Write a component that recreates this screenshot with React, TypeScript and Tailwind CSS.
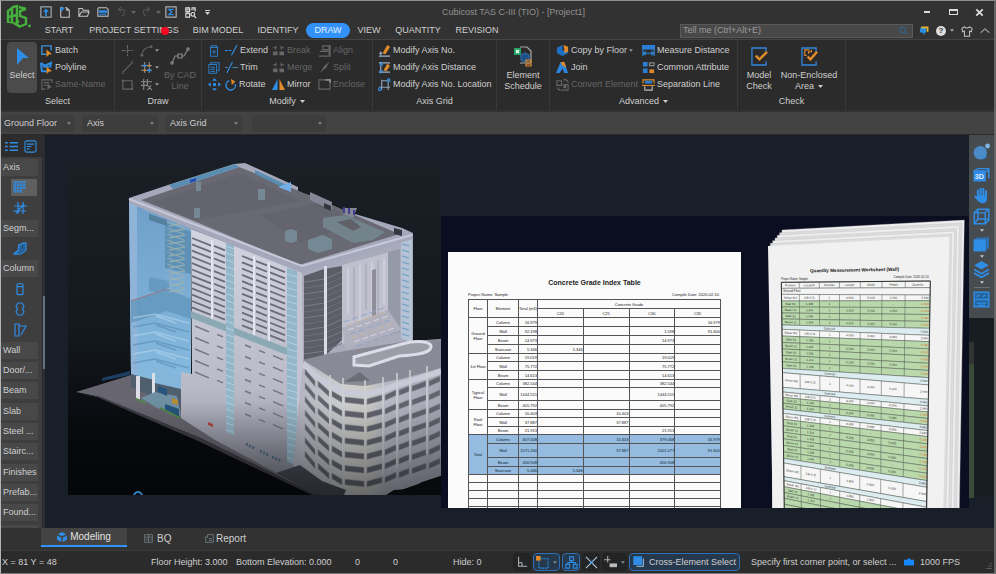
import type { ReactNode } from "react";

const BLUE = "#2f8de6";
const ORANGE = "#e08a2a";
const GREY = "#666666";

function Svg({ w = 13, h = w, vb = "0 0 14 14", children }: { w?: number; h?: number; vb?: string; children: ReactNode }) {
  return (
    <svg width={w} height={h} viewBox={vb} fill="none" stroke={BLUE} strokeWidth="1.2" className="shrink-0" aria-hidden="true">
      {children}
    </svg>
  );
}

function Caret({ className = "" }: { className?: string }) {
  return (
    <svg width="5" height="3" viewBox="0 0 5 3" className={"shrink-0 fill-current " + className} aria-hidden="true">
      <path d="M0 0h5L2.500 3z" />
    </svg>
  );
}

/* ---------- title bar and menu ---------- */

function Logo() {
  return (
    <svg width="26" height="25" viewBox="0 0 26 25" fill="none" stroke="#45b03c" strokeWidth="2.400" aria-hidden="true">
      <path d="M2 19V7l5-4 4-1v18M6 4v15M2 13l9-2" />
      <path d="M20 5l-6 2v5l6 2v6l-7 3M13 3l7 2M13 17l-3 2 4 4" />
      <path d="M2 18l5 1 7 4" strokeWidth="1.500" />
      <circle cx="23.500" cy="22" r="1.400" fill="#45b03c" stroke="none" />
    </svg>
  );
}

const quickIcons: { name: string; icon: ReactNode }[] = [
  { name: "Home", icon: <Svg w={12}><rect x="1" y="1" width="12" height="12" stroke="#aebbc8" /><path d="M7 12V5" strokeWidth="2" /><path d="M3.500 7L7 3l3.500 4z" fill={BLUE} stroke="none" /></Svg> },
  { name: "New", icon: <Svg w={12}><path d="M5 2H2v11h10V5L9 2H7M9 2v3h3" stroke="#c4c4c4" /><path d="M1 3h5M3.500 1v5" strokeWidth="1.600" /></Svg> },
  { name: "Open", icon: <Svg w={12}><path d="M1 12V3h4l1 2h6v2M1 12l3-5h9l-2 5z" stroke="#c4c4c4" /></Svg> },
  { name: "Save", icon: <Svg w={12}><path d="M2 2h9l2 2v8H1V3z" stroke="#c4c4c4" /><rect x="2" y="5" width="10" height="3" fill={BLUE} stroke="none" /><path d="M4 12V9.500h6V12" /></Svg> },
];

function TitleBar() {
  return (
    <div className="flex h-[21px] items-center pt-px">
      <div className="flex flex-1 items-center pl-[35px] text-[#666666]">
        {quickIcons.map((q) => (
          <button key={q.name} aria-label={q.name} className="flex w-[19px] justify-center">{q.icon}</button>
        ))}
        <button aria-label="Undo" className="flex w-[19px] justify-center"><Svg w={12}><path d="M4 4h3c4 0 4 5 0 8M6 1L3 4l3 3" stroke="#555" /></Svg></button>
        <Caret />
        <button aria-label="Redo" className="flex w-[20px] justify-center"><Svg w={12}><path d="M10 4H7c-4 0-4 5 0 8M8 1l3 3-3 3" stroke="#555" /></Svg></button>
        <Caret />
        <button aria-label="Summary" className="flex w-[20px] justify-center"><Svg w={12}><rect x="1" y="1" width="12" height="12" stroke="#c4c4c4" /><path d="M10 4H4.500L8 7l-3.500 3H10" strokeWidth="1.500" /></Svg></button>
        <button aria-label="Find element" className="flex w-[19px] justify-center"><Svg><path d="M2 2h4v4H2zM8 2h4v4M2 8h4v4H2z" stroke="#ddd" /><path d="M1 4h12M4 1v8M8 3h3" stroke="#ccc" strokeWidth=".8" /><circle cx="9.500" cy="9" r="2" stroke="#eee" /><path d="M11 10.500l2 2.500" stroke="#eee" /></Svg></button>
        <button aria-label="Customize" className="flex w-[14px] flex-col items-center gap-px text-[#d0d0d0]"><span className="h-px w-[5px] bg-current" /><Caret /></button>
      </div>
      <h1 className="text-[9px] text-[#929292]">Cubicost TAS C-III (TIO) - [Project1]</h1>
      <div className="flex flex-1 justify-end gap-[2px] pr-[3px]">
        <button aria-label="Minimize" className="flex w-6 items-center justify-center"><span className="h-[2px] w-[6px] bg-[#dddddd]" /></button>
        <button aria-label="Maximize" className="flex w-6 items-center justify-center"><span className="h-[6px] w-[9px] border border-t-2 border-[#dddddd]" /></button>
        <button aria-label="Close" className="flex w-6 items-center justify-center"><Svg w={9}><path d="M2 2l10 10M12 2L2 12" stroke="#e0e0e0" strokeWidth="2.600" /></Svg></button>
      </div>
    </div>
  );
}

const menu = [
  { name: "START", w: "w-[38px]" },
  { name: "PROJECT SETTINGS", w: "w-[112px]", dot: true },
  { name: "BIM MODEL", w: "w-[56px]" },
  { name: "IDENTIFY", w: "w-[60px] pl-1" },
  { name: "DRAW", w: "w-[44px]", on: true },
  { name: "VIEW", w: "w-[38px]" },
  { name: "QUANTITY", w: "w-[60px]" },
  { name: "REVISION", w: "w-[58px]" },
];

function MenuBar() {
  return (
    <nav className="flex h-[17px] items-center pl-[39px]">
      {menu.map((m) => (
        <button key={m.name} className={"relative h-[15px] shrink-0 whitespace-nowrap text-center leading-[15px] " + m.w + (m.on ? " rounded-full bg-[#3391fa] text-[#e4f1ff]" : "")}>
          {m.name}
          {m.dot && <span className="absolute top-[4px] right-[21px] h-2 w-2 rounded-full bg-[#fb0724]" />}
        </button>
      ))}
      <div className="ml-auto flex h-[14px] w-[233px] items-center border border-[#5a5a5a] bg-[#484848] pr-1">
        <input aria-label="Tell me" placeholder="Tell me (Ctrl+Alt+E)" className="min-w-0 flex-1 bg-transparent px-[2px] text-[9px] placeholder:text-[#9b9b9b]" />
        <Svg w={9}><circle cx="6" cy="6" r="4.500" stroke="#2675b8" /><path d="M9 9l4 4" stroke="#2675b8" /></Svg>
      </div>
      <div className="flex items-center gap-[7px] pr-[4px] pl-[6px] text-[#aaaaaa]">
        <button aria-label="Messages"><Svg w={10}><path d="M2 2h8v6l-4 5V9H1z" fill="#2a8fe4" stroke="none" /><path d="M3 2h9v6" stroke="#e7b72c" strokeWidth="2.500" /></Svg></button>
        <button aria-label="Help" className="flex items-center gap-1"><span className="flex h-[10px] w-[10px] items-center justify-center rounded-full bg-[#dedede] text-[8px] font-bold text-[#333333]">?</span><Caret className="w-[4px]" /></button>
        <button aria-label="Skin"><Svg w={12}><path d="M4 2L1 4l1 4 2-1v6h6V7l2 1 1-4-3-2c-1 2-5 2-6 0z" stroke="#c4c4c4" /></Svg></button>
        <button aria-label="Collapse ribbon"><Svg w={10}><path d="M1 9.500L7 4l6 5.500" stroke="#999" strokeWidth="1.600" /></Svg></button>
      </div>
    </nav>
  );
}

/* ---------- ribbon ---------- */

const ic: Record<string, ReactNode> = {
  batch: <Svg><path d="M7 11H2V2h10v5" stroke="#3c90d4" strokeWidth="1.500" /><path d="M7 6l6 5-3 .3L7 14z" fill={ORANGE} stroke="none" /></Svg>,
  poly: <Svg><path d="M1 2l4 3 7-3-1 5M1 2l1 9h5M3 6h7" strokeWidth="2" /><path d="M7 6l6 5-3 .3L7 14z" fill={ORANGE} stroke="none" /></Svg>,
  same: <Svg><path d="M6 12H2V2h11v3M4 5h6M4 8h3" stroke={GREY} /><path d="M8 6l5 4-2 .3L8 13z" fill={GREY} stroke="none" /></Svg>,
  point: <Svg><path d="M7 1v12M1 7h12" stroke={GREY} strokeDasharray="4 1" /></Svg>,
  arc: <Svg><path d="M2 13C2 7 6 3 12 3" stroke={GREY} /><circle cx="2" cy="12" r="1" stroke={GREY} /><circle cx="12" cy="3" r="1" stroke={GREY} /></Svg>,
  line: <Svg><path d="M2 12L12 2" stroke={GREY} /><path d="M1 13h2M11 1h2" stroke={GREY} /></Svg>,
  grid1: <Svg><path d="M5 1v12M10 1v12M1 5h12M1 10h12" stroke="#888" /><path d="M3 5h4M8 10h4" stroke={BLUE} strokeWidth="2" /><path d="M9 5h2M4 10h2" stroke={ORANGE} strokeWidth="2" /></Svg>,
  rect: <Svg><path d="M2 3h10v9H2z" stroke={GREY} /><path d="M1 2h2v2H1zM11 11h2v2h-2z" fill={GREY} stroke="none" /></Svg>,
  grid2: <Svg><path d="M4 1v12M8 1v7M1 4h12M1 8h7M8 8l5 5M12 8l-4 5" stroke="#888" /></Svg>,
  del: <Svg w={12}><path d="M2 3h10M4 3V1h6v2M3 3v10h8V3M6 6v4M8 6v4" stroke="#2b7cc4" /></Svg>,
  copy: <Svg w={12}><path d="M3 3V1h10v9h-2M1 3h9v10H1zM3 6h5M3 8.500h5M3 11h5" stroke="#2b7cc4" /></Svg>,
  move: <Svg><path d="M7 0l2.500 3h-5zM7 14l2.500-3h-5zM0 7l3-2.500v5zM14 7l-3-2.500v5zM5.500 5.500h3v3h-3z" fill={BLUE} stroke="none" /></Svg>,
  extend: <Svg><path d="M0 7h7" strokeDasharray="3 1" /><path d="M7 12L13 1" /></Svg>,
  trim: <Svg><path d="M2 13L8 1" /><path d="M0 7h3M8 7h6" stroke="#4680ad" /></Svg>,
  rotate: <Svg w={12}><path d="M5 2a5.500 5.500 0 1 0 7 4" strokeWidth="1.600" /><path d="M7 0l5 3-4 4" fill={ORANGE} stroke="none" /></Svg>,
  brk: <Svg><path d="M1 8h5v4H1zM8 8h5v4H8z" fill={GREY} stroke="none" /><path d="M1 4h4M9 4h4M4 2v4M10 2v4" stroke={GREY} /></Svg>,
  mirror: <Svg><path d="M6 1v12H0z" fill={BLUE} stroke="none" /><path d="M8 1v12h6z" fill={ORANGE} stroke="none" /></Svg>,
  align: <Svg><path d="M13 1v12H1M5 2h7v4H5zM2 8h10v4" stroke={GREY} /></Svg>,
  split: <Svg><path d="M2 13l7-6 3-6-5 4z" fill={GREY} stroke="none" /></Svg>,
  enclose: <Svg><path d="M1 12V2h12v10z" stroke={GREY} /><path d="M8 2h5v3" stroke="#888" strokeWidth="2" /></Svg>,
  ax1: <Svg><path d="M1 10h4M1 13h12M3 8v4" stroke="#9fb3c8" /><path d="M5 10l5-9 3 2-5 8z" fill={ORANGE} stroke="none" /></Svg>,
  ax2: <Svg><path d="M1 2h12M3 1v11M1 12h12" stroke="#9fb3c8" /><path d="M2 5l2-3 1 3M2 10l1 3 2-3" /><path d="M6 10l4-7 3 2-4 6z" fill={ORANGE} stroke="none" /></Svg>,
  ax3: <Svg><path d="M4 2v11M1 10h12M4 3h7v10" stroke="#8ea4ba" /><circle cx="11.500" cy="2.500" r="1.500" /><circle cx="2" cy="12" r="1.500" /></Svg>,
  byfloor: <Svg><path d="M1 4l6-3v6l6-1v4l-6 3-6-3z" fill="#1f70c4" stroke="none" /><path d="M8 1l5 2v5L9 10V6z" fill={ORANGE} stroke="none" /></Svg>,
  join: <Svg><path d="M5 1h4l4 12H9L7 8l-3 5H0z" fill="#2c86dd" stroke="none" /><path d="M5 1h4l2 6-4-2z" fill={ORANGE} stroke="none" /></Svg>,
  convert: <Svg><path d="M1 3h5v5H1zM8 7h5v6H6M8 2c3-1 5 1 5 3M2 10c0 2 1 3 3 3" stroke={GREY} /><path d="M8 7h3v4H8z" fill={GREY} stroke="none" /></Svg>,
  measure: <Svg><path d="M0 1h14v5H0z" fill="#2c7ed2" stroke="none" /><path d="M1 6v7M13 6v7M2 10h10M4 8l-2 2 2 2M10 8l2 2-2 2" /></Svg>,
  common: <Svg><path d="M1 1h5v5H1zM1 8h5v5H1z" fill="#2c7ed2" stroke="none" /><path d="M8 2h5v3H8z" stroke="#888" /><path d="M8 9h5v4H8z" fill={ORANGE} stroke="none" /></Svg>,
  sep: <Svg><path d="M1 6V2h12v4" stroke={ORANGE} /><path d="M3 3h8v3H3z" fill="#2c7ed2" stroke="none" /><path d="M0 8h14" stroke={ORANGE} /><path d="M3 9v4h8V9" stroke="#bbb" /></Svg>,
};

function Tool({ icon, label, off, caret, className = "" }: { icon: string; label?: string; off?: boolean; caret?: boolean; className?: string }) {
  return (
    <button aria-label={label ?? icon} disabled={off} className={"flex h-[17px] items-center gap-[2px] whitespace-nowrap " + (off ? "text-[#666666] " : "") + className}>
      {ic[icon]}
      {label}
      {caret && <Caret className="w-[4px] text-[#999999]" />}
    </button>
  );
}

function Group({ title, caret, w, children }: { title?: string; caret?: boolean; w: string; children: ReactNode }) {
  return (
    <section className={"flex shrink-0 flex-col border-r border-[#3a3a3a] pt-[2px] " + w}>
      <div className="flex h-[51px]">{children}</div>
      {title && (
        <h2 className="flex h-4 items-center justify-center gap-1">
          {title}
          {caret && <Caret />}
        </h2>
      )}
    </section>
  );
}

function Big({ icon, lines, caret, className = "" }: { icon: ReactNode; lines: string[]; caret?: boolean; className?: string }) {
  return (
    <button className={"flex flex-col items-center leading-[11px] " + className}>
      <span className="flex h-[28px] items-center justify-center">{icon}</span>
      {lines.map((l, i) => (
        <span key={l} className="flex items-center gap-1 whitespace-nowrap">
          {l}
          {caret && i === lines.length - 1 && <Caret />}
        </span>
      ))}
    </button>
  );
}

function Ribbon() {
  return (
    <div className="flex h-[71px] overflow-hidden border-t border-[#444444] bg-[#2b2b2b]">
      <Group title="Select" w="w-[114px]">
        <Big
          className="ml-[6px] w-[30px] rounded-sm bg-[#4b4b4b]"
          icon={<Svg w={13} h={17} vb="0 0 13 17"><path d="M1 0l12 10H7l-6 7z" fill={BLUE} stroke="none" /></Svg>}
          lines={["Select"]}
        />
        <div className="ml-[3px]">
          <Tool icon="batch" label="Batch" />
          <Tool icon="poly" label="Polyline" />
          <Tool icon="same" label="Same-Name" off />
        </div>
      </Group>
      <Group title="Draw" w="w-[87px]">
        <div className="ml-[6px] w-[19px]">
          <Tool icon="point" off /><Tool icon="line" off /><Tool icon="rect" off />
        </div>
        <div className="w-[24px]">
          <Tool icon="arc" off caret /><Tool icon="grid1" caret /><Tool icon="grid2" caret />
        </div>
        <Big
          className="w-[32px] text-[#666666]"
          icon={<Svg w={20} vb="0 0 20 20"><path d="M2 17l3-7h4M11 10l3 0 4-7" stroke="#858585" /><circle cx="2" cy="17" r="1.200" stroke="#858585" /><circle cx="18" cy="3" r="1.200" stroke="#858585" /><path d="M8 8h4v4H8z" stroke="#858585" /></Svg>}
          lines={["By CAD", "Line"]}
        />
      </Group>
      <Group title="Modify" caret w="w-[171px]">
        <div className="ml-[6px] w-[17px]"><Tool icon="del" /><Tool icon="copy" /><Tool icon="move" /></div>
        <div className="w-[47px]"><Tool icon="extend" label="Extend" /><Tool icon="trim" label="Trim" /><Tool icon="rotate" label="Rotate" /></div>
        <div className="w-[46px]"><Tool icon="brk" label="Break" off /><Tool icon="brk" label="Merge" off /><Tool icon="mirror" label="Mirror" /></div>
        <div><Tool icon="align" label="Align" off /><Tool icon="split" label="Split" off /><Tool icon="enclose" label="Enclose" off /></div>
      </Group>
      <Group title="Axis Grid" w="w-[124px]">
        <div className="ml-[5px]">
          <Tool icon="ax1" label="Modify Axis No." />
          <Tool icon="ax2" label="Modify Axis Distance" />
          <Tool icon="ax3" label="Modify Axis No. Location" />
        </div>
      </Group>
      <Group w="w-[53px]">
        <Big
          className="w-full"
          icon={<Svg w={20} h={21} vb="0 0 20 21"><path d="M7 1h7l4 4v12H7" stroke="#aaa" /><path d="M1 2h7v7H1z" fill="#21a464" stroke="none" /><path d="M3 4l3 3M6 4L3 7" stroke="#fff" /><path d="M8 9l4-2 4 2v5l-4 2-4-2z" fill="#1d4f86" stroke="#2d68a4" /><path d="M13 14h5v2h-5zM13 18h5v2h-5z" stroke={ORANGE} /></Svg>}
          lines={["Element", "Schedule"]}
        />
      </Group>
      <Group title="Advanced" caret w="w-[188px]">
        <div className="ml-[6px] w-[86px]">
          <Tool icon="byfloor" label="Copy by Floor" caret />
          <Tool icon="join" label="Join" />
          <Tool icon="convert" label="Convert Element" off />
        </div>
        <div>
          <Tool icon="measure" label="Measure Distance" />
          <Tool icon="common" label="Common Attribute" />
          <Tool icon="sep" label="Separation Line" />
        </div>
      </Group>
      <Group title="Check" w="w-[108px]">
        <Big
          className="w-[42px]"
          icon={<Svg w={17} h={19} vb="0 0 18 20"><path d="M16 6V1H1v18h15v-4" stroke="#3186dc" strokeWidth="1.400" /><path d="M5 9l4 4 8-8" stroke={ORANGE} strokeWidth="2.600" /></Svg>}
          lines={["Model", "Check"]}
        />
        <Big
          className="w-[58px]"
          icon={<Svg w={17} h={19} vb="0 0 18 20"><path d="M16 6V1H1v18h15v-4" stroke="#3186dc" strokeWidth="1.400" /><path d="M9 3H4v6h2M8 7V5h3V3" stroke={ORANGE} /><path d="M7 10l3 3 7-8" stroke={ORANGE} strokeWidth="2.600" /></Svg>}
          lines={["Non-Enclosed", "Area"]}
          caret
        />
      </Group>
    </div>
  );
}

function Pick({ label, value, className }: { label: string; value: string; className: string }) {
  return (
    <div className={"relative flex h-[17px] items-center rounded-sm bg-[#3d3d3d] " + className}>
      <select aria-label={label} className="h-full w-full appearance-none bg-transparent pr-3 text-[9px]">
        <option>{value}</option>
      </select>
      <Caret className="pointer-events-none absolute right-[4px] w-[4px] text-[#8a8a8a]" />
    </div>
  );
}

/* ---------- side panel ---------- */

type SideRow = { text: string } | { name: string; icon: ReactNode; on?: boolean };
const side: SideRow[] = [
  { text: "Axis" },
  { name: "Axis grid", on: true, icon: <Svg w={14}><path d="M2 1v12M5 1v12M8 1v12M11 1v8M0 2h13M0 5h13M0 8h13M0 11h9" /></Svg> },
  { name: "Auxiliary axis", icon: <Svg w={14}><path d="M5 1v12M10 1v12M1 5h13M0 10h13M3 12l8-9" /></Svg> },
  { text: "Segm..." },
  { name: "Segment", icon: <Svg w={14}><path d="M1 13l2-2h3l5-3V2L6 4v5l-3 2M8 3v7M6 13h-5" /><path d="M6 4l5-2h2v7l-5 4H1l4-3z" fill="#1d5b98" fillOpacity=".6" /></Svg> },
  { text: "Column" },
  { name: "Rectangular column", icon: <Svg w={14}><path d="M4 3c0-2 6-2 6 0v9c0 1-6 1-6 0zM4 4c0 1 6 1 6 0" /></Svg> },
  { name: "Tie column", icon: <Svg w={14}><path d="M5 1h4l2 3-1.500 3L11 10l-2 3H5l-2-3 1.500-3L3 4z" /></Svg> },
  { name: "Shaped column", icon: <Svg w={14}><path d="M2 1h4v12H2zM6 3h7L8 12" /></Svg> },
  { text: "Wall" },
  { text: "Door/..." },
  { text: "Beam" },
  { text: "Slab" },
  { text: "Steel ..." },
  { text: "Stairc..." },
  { text: "Finishes" },
  { text: "Prefab..." },
  { text: "Found..." },
];

function SidePanel() {
  return (
    <aside className="flex w-[41px] shrink-0 flex-col bg-[#3e3e3e]">
      <div className="flex h-[22px] items-center gap-[6px] bg-[#2d2d2d] pl-[4px]">
        <button aria-label="List view"><Svg><path d="M0 3h3M0 7h3M0 11h3M5 3h9M5 7h9M5 11h9" strokeWidth="1.500" /></Svg></button>
        <button aria-label="Panel view"><Svg><rect x="1" y="1" width="12" height="12" rx="2" /><path d="M3 4.500h8M3 7h5M3 9.500h3" /></Svg></button>
      </div>
      <ul className="flex flex-1 flex-col">
        {side.map((r) =>
          "text" in r ? (
            <li key={r.text} className="flex min-h-0 flex-1 items-center">
              <button className="h-[17px] w-[37px] whitespace-nowrap bg-[#484848] pl-[2px] text-left leading-[17px]">{r.text}</button>
            </li>
          ) : (
            <li key={r.name} className="flex min-h-0 flex-1 items-center pl-[10px]">
              <button aria-label={r.name} className={"flex h-[17px] w-[26px] items-center pl-[2px] " + (r.on ? "bg-[#5f5f5f]" : "")}>{r.icon}</button>
            </li>
          )
        )}
      </ul>
      <div className="mt-[2px] h-[3px] w-[37px] bg-[#484848]" />
    </aside>
  );
}

/* ---------- building model ---------- */

const slats: string[] = [];
const bays = [[192, 211], [214, 225], [242, 253], [256, 267], [270, 285]];
bays.forEach(([a, b]) => {
  for (let k = 0; k < 12; k++) {
    const y = 238 + (a - 192) * 0.36 + k * 6.3;
    slats.push(`M${a} ${y}L${b} ${y + (b - a) * 0.4}`);
  }
});
const lowSlats: string[] = [];
bays.forEach(([a, b]) => {
  for (let k = 0; k < 7; k++) {
    const y = 326 + (a - 192) * 0.38 + k * 11.5;
    if (a < 240 && k > 4) continue;
    lowSlats.push(`M${a + 3} ${y}L${b - 2} ${y + (b - a - 5) * 0.42}`);
  }
});

const rimX = [303, 316, 330, 343, 365, 383, 397, 410, 427, 441];
const rimY = [364, 376, 386, 392, 394, 390, 385, 381, 376, 371];
const windows: string[] = [];
for (let k = 0; k < 7; k++) {
  for (let i = 0; i < 9; i++) {
    const x0 = rimX[i] + 2;
    const x1 = rimX[i + 1] - 1;
    const y0 = rimY[i] + 5 + k * 13.7;
    const y1 = rimY[i + 1] + 5 + k * 13.7;
    windows.push(`M${x0} ${y0}L${x1} ${y1}v5.500L${x0} ${y0 + 5.5}z`);
  }
}

function Building() {
  return (
    <svg viewBox="68 163 373 332" className="absolute top-[28px] left-[23px] h-[332px] w-[373px]" role="img" aria-label="3D model of the building">
      <defs>
        <linearGradient id="sky" x1="0" y1="0" x2="0" y2="1"><stop offset="0" stopColor="#191f25" /><stop offset=".5" stopColor="#14191e" /><stop offset=".85" stopColor="#06080b" /><stop offset="1" stopColor="#040607" /></linearGradient>
        <linearGradient id="front" x1="0" y1="0" x2="0" y2="1"><stop offset="0" stopColor="#d3d4e0" /><stop offset=".6" stopColor="#b9bac8" /><stop offset="1" stopColor="#7c7d89" /></linearGradient>
        <linearGradient id="blueface" x1="0" y1="0" x2="0" y2="1"><stop offset="0" stopColor="#6f9fc8" /><stop offset="1" stopColor="#86bbe0" /></linearGradient>
        <linearGradient id="round" x1="0" y1="0" x2="1" y2="0"><stop offset="0" stopColor="#b0b1bf" /><stop offset=".35" stopColor="#cecfce" /><stop offset=".5" stopColor="#cbcbc3" /><stop offset=".62" stopColor="#b8b9c6" /><stop offset="1" stopColor="#a5a6b4" /></linearGradient>
        <linearGradient id="fade" x1="0" y1="0" x2="0" y2="1"><stop offset=".35" stopColor="#050709" stopOpacity="0" /><stop offset="1" stopColor="#050709" stopOpacity=".5" /></linearGradient>
      </defs>
      <rect x="68" y="163" width="373" height="332" fill="url(#sky)" />
      <path d="M102 378l28-7v4l-28 6z" fill="#1c3e60" />
      <path d="M76 392l55-17 60 24 140 96h-14L200 438 100 397z" fill="#67656f" />
      <path d="M79 393l22 4 99 41 117 57h-5L198 441 97 397z" fill="#3e3d45" />
      {/* left wing */}
      <path d="M129 200l62 26v158l-10 4-50-13z" fill="url(#blueface)" />
      <path d="M129 200l8 3v172l-6-1z" fill="#8fb4d8" />
      <path d="M165 222l26 10v42l-26-6z" fill="#5e91b6" />
      <path d="M149 214l18 6v6l-18-6z" fill="#547f9f" />
      <path d="M149 277l20 4v14l-20-4zM131 301l36-12 24 10v20l-24-8-36 12z" fill="#5f93b8" opacity=".7" />
      <path d="M131 301l36-12" stroke="#9a7488" />
      {Array.from({ length: 12 }, (_, i) => (
        <path key={i} d={`M167 ${222 + i * 6}l17 6M169 ${226 + i * 6}l16 -3`} stroke="#a2b3b0" strokeWidth="1.300" opacity=".75" />
      ))}
      {Array.from({ length: 6 }, (_, i) => (
        <path key={i} d={`M133 ${318 + i * 9}l22 -4 34 9M156 ${316 + i * 9}l20 7`} stroke={i % 2 ? "#5a8aac" : "#b4d6ec"} strokeWidth="1.500" fill="none" opacity=".6" />
      ))}
      <path d="M131 374l50 13v22l-50-22z" fill="#4f5f6e" />
      <path d="M152 366l29 10v13l-26-6z" fill="#84b6da" />
      <path d="M136 376h4v24l-4-2zM152 373h3v26l-3-1z" fill="#dcdde6" />
      <path d="M141 398l14-6 22 4 4 20-24-8z" fill="#6e8ea2" />
      <path d="M158 386l9 3v7l-9-4zM165 404l14 5v8l-14-6z" fill="#26547c" />
      <path d="M172 398l6 2v5l-6-2z" fill="#b78a34" />
      <path d="M136 399l10 4M160 408l20 10" stroke="#538450" strokeWidth="2" />
      {/* front */}
      <path d="M191 229l111 42 1 90 20 20 14 18 40 96h-60L215 440l-34-22V372l11 2z" fill="url(#front)" />
      <path d={slats.join("")} stroke="#6b6c78" strokeWidth="1.800" fill="none" />
      <path d={lowSlats.join("")} stroke="#74757f" strokeWidth="1.500" fill="none" />
      <path d="M212 240v85M254 256v84M269 262v84" stroke="#e4e5ef" strokeWidth="2" />
      <path d="M191 311l96 37v7l-96-37z" fill="#8aa9b5" />
      <path d="M226 241l8 3v192l-8-4zM287 268l10 3v196l-10-6z" fill="#93b6c8" />
      {Array.from({ length: 28 }, (_, i) => (
        <path key={i} d={`M226 ${246 + i * 6.8}l8 3M287 ${274 + i * 6.8}l10 3`} stroke="#b6d0de" />
      ))}
      <path d="M297 270h6v200l-6-5z" fill="#c3c4d2" />
      <path d="M208 422l5 2v3l-5-2z" fill="#b44844" />
      <path d="M246 444l8 4M260 451l8 4M272 457l10 4" stroke="#516981" strokeWidth="3" strokeDasharray="2 1.500" />
      {/* right face */}
      <path d="M302 271l111-34v110l-110 16z" fill="#a9abba" />
      <path d="M304 276l20-7 18-3v74l-16 15-22 5z" fill="#5c5d67" />
      {Array.from({ length: 13 }, (_, i) => (
        <path key={i} d={`M304 ${282 + i * 6}l21 -3 18 -8`} stroke={i % 2 ? "#6c6e79" : "#7b7c86"} fill="none" />
      ))}
      <path d="M324 266h3v90h-3z" fill="#dadbe6" />
      <path d="M342 265l48-13v80l-48 12z" fill="#c0c0ce" />
      <path d="M388 252l12-3v83l-12 3z" fill="#949aa8" />
      {Array.from({ length: 7 }, (_, i) => (
        <path key={i} d={`M${348 + i * 6} ${268 - i * 1.6}v${46 + (i % 3) * 8}`} stroke={i % 2 ? "#b0b0c0" : "#cfcfda"} strokeWidth="2" />
      ))}
      <path d="M372 270l4-1v53l-4 1z" fill="#908f99" />
      <path d="M342 328l46-18 14 20-56 20z" fill="#b0b0be" />
      {Array.from({ length: 7 }, (_, i) => (
        <path key={i} d={`M${344 + i * 2} ${322 + i * 4}l${40} -14`} stroke={["#8fa6c8", "#c9b69d", "#d9d9e4"][i % 3]} strokeDasharray="6 3" />
      ))}
      <path d="M401 238l11-3v108l-11-5z" fill="#b6c3d6" />
      {Array.from({ length: 16 }, (_, i) => (
        <path key={i} d={`M402 ${244 + i * 6}l7 2`} stroke="#7fa9c5" strokeWidth="1.500" />
      ))}
      {/* roof */}
      <path d="M129 198l39-13 66-21 11-1 53 24v5l14 4 33 15 57 17 11 5v6l-111 34-111-44-62-26z" fill="#a5a7bb" />
      <path d="M141 200l98-33 60 24 100 43-100 31-105-44z" fill="#686972" />
      <path d="M152 202l88-29 60 28-47 9-60 10zM260 215l60-12 40 20-60 20z" fill="#62636d" opacity=".7" />
      <path d="M169 185l66-21 4 3-66 22zM255 170l32 15-5 2-27-13z" fill="#598db2" />
      <path d="M190 180l6-2v3l-6 2z" fill="#234ab5" />
      <path d="M278 187l13-5v10z" fill="#73aee6" />
      <path d="M258 189h7v11h-7zM194 208h6v10h-6zM196 182h5v9h-5zM285 231l6-2 6 2v10l-6 2-6-2zM308 240l14-5 10 4v10l-14 4-10-4z" fill="#748993" />
      <path d="M323 218l22-3 40 17-12 8-20 3-30-16z" fill="#72838b" />
      <path d="M337 222l14-3 10 8-8 4z" fill="#606068" />
      <path d="M310 192l22 10v8l-22-10zM343 208h14l-4 10-10-4z" fill="#858696" />
      <path d="M324 203l7 3v5l-7-3zM394 228l8 2v6l-8-2z" fill="#33353f" />
      <path d="M344 207v6M349 208v6M354 210v5" stroke="#3e3f92" strokeWidth="2" />
      <path d="M129 199l62 24 111 43 110-31" stroke="#c6c8d8" strokeWidth="2" fill="none" />
      {/* podium */}
      <path d="M303 361l24-5 70-14 44-3v137l-54 19h-66l-28-30z" fill="url(#round)" />
      <path d="M303 360l24-6 80-13 34-1v28l-40 11-36 7-24-2z" fill="#898a95" />
      <path d="M354 365v-8l48-13c14-4 30-3 29 3-1 6-12 8-32 9l-30 10z" fill="#9d9da8" stroke="#dcdde9" strokeWidth="3" />
      <path d="M344 382l16-10 10 9z" fill="#6c6c77" />
      <path d="M303 364l13 12 14 10 13 6 22 2 18-4 14-5 13-4 17-5 14-5" stroke="#c9cad7" strokeWidth="6" fill="none" />
      <path d={windows.join("")} fill="#62636d" />
      <path d={windows.join("")} fill="none" stroke="#8f9098" strokeWidth=".6" />
      <path d="M365 380v96M343 378v94M330 375v84M383 377v98M397 373v96M410 370v92M427 366v88" stroke="#cfd0d5" strokeWidth="1.500" />
      <path d="M386 495l8-5 16-1 12-7 19-6v19z" fill="#0a0b0e" />
      <path d="M300 465l22 16 24 9-2 5h-28l-40-22z" fill="#4a4a54" />
      <path d="M129 375l52-3 240-20h20v143H300L180 440 76 392z" fill="url(#fade)" />
      <path d="M134 496a4 4 0 0 1 8 0" stroke="#2f80bd" strokeWidth="2" fill="none" />
    </svg>
  );
}

/* ---------- concrete grade index table ---------- */

type Line = { floor?: string; span?: number; h: string; cells: string[] };
const lines: Line[] = [
  { floor: "Ground Floor", span: 4, h: "h-[9px]", cells: ["Column", "16.979", "", "", "", "16.979"] },
  { h: "h-[9px]", cells: ["Wall", "92.198", "", "", "1.598", "91.600"] },
  { h: "h-[9px]", cells: ["Beam", "14.973", "", "", "14.973", ""] },
  { h: "h-[9px]", cells: ["Staircase", "5.346", "5.346", "", "", ""] },
  { floor: "1st Floor", span: 3, h: "h-[8px]", cells: ["Column", "19.019", "", "", "19.019", ""] },
  { h: "h-[9px]", cells: ["Wall", "75.772", "", "", "75.772", ""] },
  { h: "h-[9px]", cells: ["Beam", "14.613", "", "", "14.613", ""] },
  { floor: "Typical Floor", span: 3, h: "h-[8px]", cells: ["Column", "382.544", "", "", "382.544", ""] },
  { h: "h-[13px]", cells: ["Wall", "1444.515", "", "", "1444.515", ""] },
  { h: "h-[9px]", cells: ["Beam", "405.792", "", "", "405.792", ""] },
  { floor: "Roof Floor", span: 3, h: "h-[8px]", cells: ["Column", "10.403", "", "10.403", "", ""] },
  { h: "h-[9px]", cells: ["Wall", "37.887", "", "37.887", "", ""] },
  { h: "h-[8px]", cells: ["Beam", "21.913", "", "", "21.913", ""] },
];
const totals: Line[] = [
  { floor: "Total", span: 4, h: "h-[9px]", cells: ["Column", "407.008", "", "10.403", "379.068", "16.979"] },
  { h: "h-[14px]", cells: ["Wall", "1571.260", "", "37.887", "1501.077", "91.600"] },
  { h: "h-[9px]", cells: ["Beam", "456.908", "", "", "456.908", ""] },
  { h: "h-[8px]", cells: ["Staircase", "5.346", "5.346", "", "", ""] },
];

const cell = "border border-[#555555] p-0 font-normal ";

function Rows({ data }: { data: Line[] }) {
  return (
    <>
      {data.map((l, i) => (
        <tr key={i} className={l.h}>
          {l.floor && <th rowSpan={l.span} scope="rowgroup" className={cell}>{l.floor}</th>}
          {l.cells.map((c, j) => (
            <td key={j} className={cell + (j === 0 ? "text-center" : "text-right")}>{c}</td>
          ))}
        </tr>
      ))}
    </>
  );
}

function GradeSheet() {
  return (
    <article className="absolute top-[36px] left-[7px] h-[256px] w-[293px] overflow-hidden bg-[#fbfbfb] px-[20px] pt-[25px] text-[4px] leading-[5px] text-[#202020]">
      <h2 className="h-[12px] text-center text-[7px] leading-[12px] font-bold text-[#1c1c1c]">Concrete Grade Index Table</h2>
      <div className="flex h-[10px] items-center justify-between pr-[2px]">
        <span>Project Name: Sample</span>
        <span>Compile Date: 2020-02-10</span>
      </div>
      <table className="w-full table-fixed border-collapse border border-[#333333]">
        <colgroup>
          <col className="w-[19px]" /><col className="w-[31px]" /><col className="w-[19px]" /><col /><col /><col /><col />
        </colgroup>
        <thead>
          <tr className="h-[9px]">
            <th rowSpan={2} className={cell}>Floor</th>
            <th rowSpan={2} className={cell}>Element</th>
            <th rowSpan={2} className={cell}>Total (m3)</th>
            <th colSpan={4} className={cell}>Concrete Grade</th>
          </tr>
          <tr className="h-[9px]">
            <th className={cell}>C20</th><th className={cell}>C25</th><th className={cell}>C30</th><th className={cell}>C35</th>
          </tr>
        </thead>
        <tbody><Rows data={lines} /></tbody>
        <tbody className="bg-[#95bce0] text-[#0c1c2c]"><Rows data={totals} /></tbody>
        <tbody>
          {[0, 1, 2, 3, 4].map((r) => (
            <tr key={r} className="h-[8px]">{[0, 1, 2, 3, 4, 5, 6].map((c) => <td key={c} className={cell} />)}</tr>
          ))}
        </tbody>
      </table>
    </article>
  );
}

/* ---------- stacked worksheet, seen at an angle ---------- */

// kind, left edge y, right edge y (bottom of the band), rows inside
const bands: [string, number, number, number][] = [
  ["head", 235, 233, 1], ["plain", 253, 255, 1], ["white", 273, 272, 1], ["green", 345, 355, 4], ["sub", 358, 376, 1],
  ["white", 378, 395, 1], ["green", 475, 503, 5], ["sub", 488, 525, 1], ["white", 532, 568, 1], ["sub", 546, 588, 1],
  ["white", 562, 606, 1], ["green", 597, 645, 2], ["sub", 610, 662, 1], ["white", 628, 680, 1], ["green", 745, 812, 6],
  ["sub", 759, 832, 1], ["white", 800, 875, 1], ["sub", 812, 892, 1], ["white", 830, 912, 1], ["green", 900, 990, 4],
];
const fills: Record<string, string> = { head: "#f4f4f4", plain: "#f4f4f4", white: "#f6f6f6", green: "#b9d9ac", sub: "#dcecf1" };
const colAt = [0, 0.12, 0.255, 0.39, 0.53, 0.676, 0.832, 1];
const heads = ["Position", "Location", "Number", "Length", "Width", "Height", "Quantity"];
const xAt = (u: number, y: number) => 94 + (y - 215) * 0.013 + u * (447 - (y - 215) * 0.03);

type Strip = { kind: string; l0: number; l1: number; r0: number; r1: number; n: number };
const strips: Strip[] = [];
let pl = 217;
let pr = 213;
bands.forEach(([kind, l, r, n]) => {
  for (let i = 0; i < n; i++) {
    strips.push({ kind, l0: pl + ((l - pl) * i) / n, l1: pl + ((l - pl) * (i + 1)) / n, r0: pr + ((r - pr) * i) / n, r1: pr + ((r - pr) * (i + 1)) / n, n: i });
  }
  pl = l;
  pr = r;
});

function rowText(s: Strip): string[] {
  if (s.kind === "head") return heads;
  if (s.kind === "plain") return ["Ground Floor", "", "", "", "", "", ""];
  if (s.kind === "sub") return ["", "", "Subtotal", "", "", "", "0.960"];
  if (s.kind === "white") return ["Shear W1", "1/B-C-D", "1", "4.900", "3.000", "0.200", "2.940"];
  return s.n % 2 ? ["Beam 11", "1-2/A", "1", "0.200", "3.000", "0.200", "-0.240"] : ["Slab S1", "1-3/B", "1", "-", "-", "-", "-0.180"];
}

function Worksheet() {
  return (
    <svg viewBox="0 18 657 876" className="absolute top-0 left-[309px] h-[292px] w-[219px]" role="img" aria-label="Quantity Measurement Worksheet (Wall)" fontFamily="Liberation Sans, Arial, sans-serif">
      {[6, 5, 4, 3, 2, 1].map((k) => (
        <path key={k} d={`M${54 + k * 7} ${108 - k * 8}L${598 + k * 7.5} ${80 - k * 8.3}L${580 + k * 8} 900H68z`} fill={k % 2 ? "#dcdcde" : "#efefef"} stroke="#bdbdc0" strokeWidth="1" />
      ))}
      <path d="M54 108L598 80L580 900H68z" fill="#f1f1f1" />
      <text x="180" y="187" fontSize="14" fontWeight="bold" fill="#111" transform="rotate(-1 180 187)">Quantity Measurement Worksheet (Wall)</text>
      <text x="94" y="211" fontSize="8" fill="#222">Project Name: Sample</text>
      <text x="536" y="205" fontSize="9" fill="#222" textAnchor="end">Compile Date: 2020-02-10</text>
      {strips.map((s, i) => {
        const at = (u: number, l: number, r: number) => `${xAt(u, l)} ${l + (r - l) * u}`;
        const angle = (Math.atan2((s.r0 + s.r1 - s.l0 - s.l1) / 2, 440) * 180) / Math.PI;
        return (
          <g key={i}>
            <path d={`M${at(0, s.l0, s.r0)}L${at(1, s.l0, s.r0)}L${at(1, s.l1, s.r1)}L${at(0, s.l1, s.r1)}z`} fill={fills[s.kind]} stroke="#4d564d" strokeWidth="1.500" />
            {s.kind !== "sub" && s.kind !== "plain" && colAt.slice(1, 7).map((u) => (
              <path key={u} d={`M${at(u, s.l0, s.r0)}L${at(u, s.l1, s.r1)}`} stroke="#4d564d" strokeWidth="1.500" />
            ))}
            {rowText(s).map((t, c) => {
              const u = s.kind === "plain" ? 0.07 : (colAt[c] + colAt[c + 1]) / 2 + (c === 6 && s.kind !== "head" ? 0.05 : 0);
              const l = (s.l0 + s.l1) / 2;
              const r = (s.r0 + s.r1) / 2;
              const x = xAt(u, l);
              const y = l + (r - l) * u + 3;
              return t && y < 880 ? (
                <text key={c} x={x} y={y} fontSize="9" textAnchor="middle" fill={c === 6 && s.kind === "green" ? "#e0662a" : "#2c302c"} transform={`rotate(${angle} ${x} ${y})`}>{t}</text>
              ) : null;
            })}
          </g>
        );
      })}
      <path d={`M${xAt(0, 217)} 217L${xAt(1, 213)} 213L${xAt(1, 900)} 900M${xAt(0, 217)} 217L${xAt(0, 900)} 900`} fill="none" stroke="#333" strokeWidth="3" />
    </svg>
  );
}

/* ---------- view tools ---------- */

function ViewTools() {
  const more = <span className="flex h-[9px] items-center"><Caret className="w-[4px] text-[#c8ccd0]" /></span>;
  return (
    <div className="absolute top-0 right-0 flex h-[183px] w-[25px] flex-col items-center bg-[#464b50] pt-[8px]">
      <button aria-label="Orbit" className="mb-[5px]"><Svg w={17}><circle cx="6" cy="8" r="5.500" fill="#4b8cc8" stroke="none" /><circle cx="12" cy="2.500" r="2" fill="#7db7ea" stroke="none" /><path d="M8 13l3-2" /></Svg></button>
      <button aria-label="3D view" className="mb-[5px]"><Svg w={17}><path d="M4 3h9v8M4 3L1 5M13 3l-2 3" /><path d="M1 5h9v8H1z" fill={BLUE} /><text x="1.500" y="11.500" fontSize="6" fontWeight="bold" fill="#dcecff" stroke="none" fontFamily="Liberation Sans, sans-serif">3D</text></Svg></button>
      <button aria-label="Pan" className="mb-[4px]"><Svg w={17}><path d="M4 8V3M6.200 7V1.500M8.500 7V1.500M10.700 8V3.500" strokeWidth="1.700" strokeLinecap="round" /><path d="M3.500 7h8v3c0 4-5 4-7 2L1 8l1-1 2 1.500z" fill={BLUE} stroke="none" /></Svg></button>
      <button aria-label="Wireframe" className="mb-px"><Svg w={17}><path d="M1 4h9v9H1zM1 4l3-3h9v9l-3 3M10 4l3-3M4 1v8h9M4 9l-3 4" /></Svg></button>
      {more}
      <button aria-label="Shaded"><Svg w={17}><path d="M1 4h9v9H1z" fill={BLUE} /><path d="M2 3l1-1h10v9l-2 1V3z" fill="#2578cc" stroke="none" /></Svg></button>
      {more}
      <button aria-label="Layers"><Svg w={17}><path d="M7 0l6 3.500L7 7 1 3.500z" fill={BLUE} stroke="none" /><path d="M1 7l6 3.500L13 7M1 10l6 3.500 6-3.500" strokeWidth="1.500" /></Svg></button>
      {more}
      <span className="h-px w-[16px] bg-[#6a6e73]" />
      <button aria-label="Display settings" className="mt-[3px]"><Svg w={17}><rect x="1" y="1" width="12" height="12" fill="#25649d" /><path d="M1 7h12M3 5l2-2M8 5l2-2M3 10h8M4 12h6" /></Svg></button>
    </div>
  );
}

/* ---------- status bar ---------- */

function StatusBar() {
  const box = "flex h-[18px] items-center justify-center rounded-sm border ";
  const dark = box + "border-[#222222] bg-[#222426] ";
  const lit = box + "border-[#2f6fb5] bg-[#26384c] ";
  return (
    <footer className="flex h-[23px] shrink-0 items-center whitespace-nowrap border-t border-[#3c3c3c] bg-[#2b2b2b] pl-px">
      <span className="w-[149px] shrink-0">X = 81 Y = 48</span>
      <span className="w-[85px] shrink-0">Floor Height: 3.000</span>
      <span className="w-[119px] shrink-0">Bottom Elevation: 0.000</span>
      <span className="w-[38px] shrink-0">0</span>
      <span className="w-[60px] shrink-0">0</span>
      <span className="w-[60px] shrink-0">Hide: 0</span>
      <div className="flex shrink-0 gap-[2px]">
        <button aria-label="Ortho" className={dark + "w-[18px]"}><Svg w={12}><path d="M3 1v11h10M3 8h4v4" stroke="#b4b4b4" /></Svg></button>
        <button aria-label="Selection box" className={lit + "w-[27px] gap-1"}><Svg w={13}><path d="M3 3h10v10H3z" strokeDasharray="2 1" /><path d="M0 0h5v5H0z" fill={ORANGE} stroke="none" /></Svg><Caret className="w-[4px] text-[#888888]" /></button>
        <button aria-label="Element tree" className={lit + "w-[18px]"}><Svg w={13}><path d="M5 1h4v4H5zM1 9h4v4H1zM9 9h4v4H9zM7 5v2M3 9V7h8v2" /></Svg></button>
        <button aria-label="Intersection" className={dark + "w-[18px]"}><Svg w={13}><path d="M1 1l12 12M13 1L1 13" stroke="#b8c8d8" /><circle cx="7" cy="7" r="1" /></Svg></button>
        <button aria-label="Dynamic input" className={dark + "w-[25px] gap-1"}><Svg w={13}><path d="M4 0v7M0 4h7" stroke="#aaa" /><path d="M6 8h8v4H6z" fill="#bbb" stroke="none" /></Svg><Caret className="w-[4px] text-[#888888]" /></button>
        <button className={lit + "w-[111px] gap-[4px]"}><Svg w={12}><path d="M1 1h9v9H1z" fill={BLUE} /><path d="M12 3v9H4" stroke="#9cc9f5" /></Svg>Cross-Element Select</button>
      </div>
      <span className="w-[164px] shrink-0 pl-[11px]">Specify first corner point, or select ...</span>
      <span className="flex shrink-0 items-center gap-[6px]"><Svg w={10}><path d="M5 2h4v2h5v8H0V4h5z" fill="#1688ff" stroke="none" /></Svg>1000 FPS</span>
      <span className="mt-2 mr-[2px] ml-auto"><Svg w={7}><path d="M11 1h2M7 6h2M11 6h2M3 11h2M7 11h2M11 11h2" stroke="#888" strokeWidth="2" /></Svg></span>
    </footer>
  );
}

export default function App() {
  return (
    <div className="flex h-screen flex-col overflow-hidden border border-r-2 border-t-[#8c918f] border-r-[#666666] border-b-[#777777] border-l-[#b5b5b5] bg-[#323232] font-['Liberation_Sans',Arial,sans-serif] text-[9px] leading-[11px] text-[#cfcfcf]">
      <header className="relative shrink-0">
        <TitleBar />
        <MenuBar />
        <div className="absolute top-[3px] left-[5px]"><Logo /></div>
        <Ribbon />
        <div className="mt-[2px] flex h-[22px] items-center bg-[#434343]">
          <Pick label="Floor" value="Ground Floor" className="w-[74px] pl-[3px]" />
          <Pick label="Category" value="Axis" className="ml-[7px] w-[76px] pl-[5px]" />
          <Pick label="Element type" value="Axis Grid" className="ml-[7px] w-[77px] pl-[5px]" />
          <Pick label="Element" value="" className="ml-[10px] w-[74px]" />
        </div>
      </header>
      <div className="flex min-h-0 flex-1 border-t border-[#2a2a2a]">
        <SidePanel />
        <div className="flex w-[3px] shrink-0 flex-col bg-[#2b2d30]"><span className="mt-[161px] h-[73px] w-[2px] self-end bg-[#66717c]" /></div>
        <main className="relative min-w-0 flex-1 overflow-hidden bg-[#191f28]">
          <div className="absolute top-[182px] right-0 h-[180px] w-[24px] bg-[#171d20]" />
          <div className="absolute top-[207px] right-[20px] flex h-[156px] w-[5px] flex-col bg-[#3b4a36]"><span className="h-[22px] bg-[#323433]" /></div>
          <Building />
          <div className="absolute top-[81px] left-[396px] h-[292px] w-[528px] overflow-hidden bg-[#0b0d20]">
            <GradeSheet />
            <Worksheet />
          </div>
          <ViewTools />
        </main>
      </div>
      <nav className="flex h-[22px] shrink-0 items-start pl-[40px] text-[10px]">
        <button className="flex h-[19px] w-[86px] items-center justify-center gap-[3px] border-b-2 border-[#3391fa] bg-[#434343] text-[#e2e2e2]"><Svg w={10}><path d="M7 0l6 3-6 3-6-3zM0 5l6 3v6l-6-3zM14 5L8 8v6l6-3z" fill={BLUE} stroke="none" /></Svg>Modeling</button>
        <button className="ml-[17px] flex h-[21px] w-[61px] items-center gap-[4px]"><Svg w={9}><path d="M1 1h12v12H1zM1 5h12M7 1v12M3 9h3M9 9h3" stroke="#78858a" /></Svg>BQ</button>
        <button className="flex h-[21px] items-center gap-[2px]"><Svg w={9}><path d="M4 1h9v12H1V4M4 1v4H1M6 7h5M6 10h5" stroke="#78858a" /></Svg>Report</button>
      </nav>
      <StatusBar />
    </div>
  );
}
